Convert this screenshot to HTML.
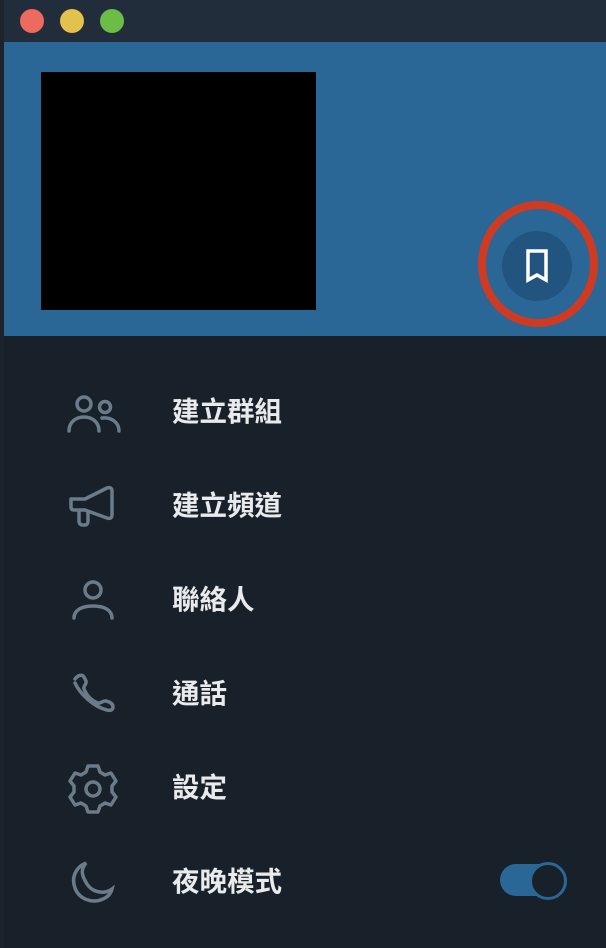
<!DOCTYPE html>
<html><head><meta charset="utf-8"><style>
html,body{margin:0;padding:0;width:606px;height:948px;overflow:hidden;background:#18202a;font-family:"Liberation Sans","Noto Sans CJK TC",sans-serif}
.tb{position:absolute;left:0;top:0;width:606px;height:42px;background:#222d3c}
.dot{position:absolute;top:9px;width:24px;height:24px;border-radius:50%}
.edge{position:absolute;left:0;top:0;width:4px;height:948px;background:#1c232c}
.hdr{position:absolute;left:4px;top:42px;width:602px;height:294px;background:#2a6797}
.photo{position:absolute;left:41px;top:72px;width:275px;height:238px;background:#000}
.row{position:absolute;left:0;width:606px;height:50px}
.row span{position:absolute;left:172px;top:7px;font-size:27.5px;font-weight:bold;color:#e9eaeb;line-height:36px}
.row svg{position:absolute;left:66px;top:0}
</style></head><body>
<div class="tb"></div>
<div class="dot" style="left:20px;background:#ee6a5f"></div>
<div class="dot" style="left:60px;background:#e2c14d"></div>
<div class="dot" style="left:100px;background:#6cbd45"></div>
<div class="hdr"></div>
<div class="edge"></div>
<div class="photo"></div>
<svg style="position:absolute;left:470px;top:196px" width="136" height="136">
<circle cx="67" cy="70" r="35" fill="#215580"/>
<path d="M58 55h18v29l-9-5-9 5z" fill="none" stroke="#fff" stroke-width="3.5" stroke-linejoin="miter"/>
<ellipse cx="68" cy="68" rx="56" ry="59" fill="none" stroke="#cf3a22" stroke-width="8"/>
</svg>
<div class="row" style="top:387px"><svg width="56" height="50" fill="none" stroke="#6b7b89" stroke-width="3.5" stroke-linecap="round"><circle cx="18" cy="17" r="7"/><path d="M3 44c0-9 7-14 15-14s15 5 15 14"/><circle cx="39" cy="20" r="5.5"/><path d="M36 31c9-1 17 4 17 13"/></svg><span>建立群組</span></div>
<div class="row" style="top:481px"><svg width="56" height="50" fill="none" stroke="#6b7b89" stroke-width="3.5" stroke-linejoin="round"><path d="M5 18h14l22-11c3-1 5 0 5 3v24c0 3-2 4-5 3L19 29H8c-2 0-3-1-3-3z"/><path d="M13 29v11c0 3 2 4 4 4h2c2 0 3-2 3-4v-9"/></svg><span>建立頻道</span></div>
<div class="row" style="top:575px"><svg width="56" height="50" fill="none" stroke="#6b7b89" stroke-width="3.5" stroke-linecap="round"><circle cx="27" cy="15" r="8"/><path d="M8 43c0-8 8-12 19-12s19 4 19 12"/></svg><span>聯絡人</span></div>
<div class="row" style="top:669px"><svg width="56" height="50" fill="none" stroke="#6b7b89" stroke-width="3.5" stroke-linecap="round"><path d="M9 10c3-4 7-5 9-2l2 4c1 3-3 5-2 8 3 7 8 12 14 14 3 1 5-3 8-2 4 1 7 3 7 6 0 3-3 4-6 3-13-3-27-16-32-27"/></svg><span>通話</span></div>
<div class="row" style="top:763px"><svg width="56" height="52" fill="none" stroke="#6b7b89" stroke-width="3.5" stroke-linejoin="round"><path d="M22 3h10l2 6 5 3 6-2 5 8-4 5v6l4 5-5 8-6-2-5 3-2 6H22l-2-6-5-3-6 2-5-8 4-5v-6l-4-5 5-8 6 2 5-3z"/><circle cx="27" cy="26" r="7"/></svg><span>設定</span></div>
<div class="row" style="top:857px"><svg width="56" height="52" fill="none" stroke="#6b7b89" stroke-width="3.5" stroke-linecap="round"><path d="M20 6C10 10 5 20 9 31s17 16 28 11c5-2 8-6 9-10-8 6-20 3-25-5S14 13 20 6z"/></svg><span>夜晚模式</span></div>
<div style="position:absolute;left:500px;top:864px;width:66px;height:32px;border-radius:16px;background:#2a6797"></div>
<div style="position:absolute;left:529px;top:862px;width:32px;height:32px;border-radius:50%;background:#18202a;border:3px solid #2a6797"></div>
</body></html>
